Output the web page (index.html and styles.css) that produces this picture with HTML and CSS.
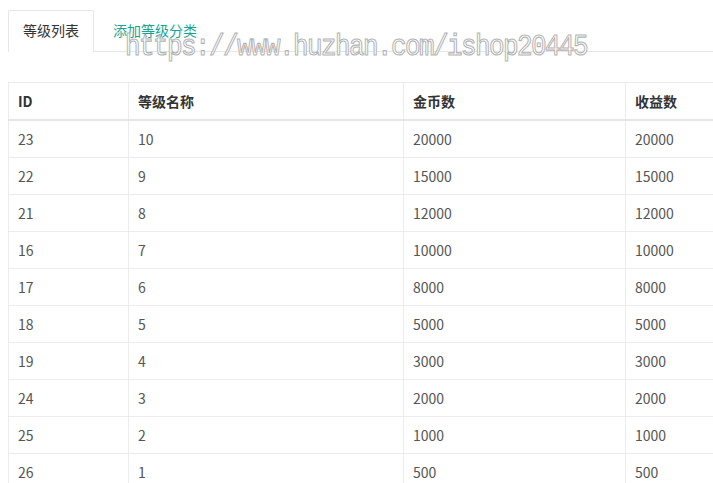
FILE: index.html
```html
<!DOCTYPE html>
<html lang="zh">
<head>
<meta charset="utf-8">
<title>等级列表</title>
<link rel="stylesheet" href="styles.css">
</head>
<body>
<div class="page">
  <div class="tabs">
    <ul class="tab-title">
      <li class="tab active">等级列表</li>
      <li class="tab link">添加等级分类</li>
    </ul>
  </div>
  <div class="watermark">https://www.huzhan.com/ishop20445</div>
  <div class="table-wrap">
  <table class="grid">
    <colgroup>
      <col class="c1"><col class="c2"><col class="c3"><col class="c4">
    </colgroup>
    <thead>
      <tr><th>ID</th><th>等级名称</th><th>金币数</th><th>收益数</th></tr>
    </thead>
    <tbody>
      <tr><td>23</td><td>10</td><td>20000</td><td>20000</td></tr>
      <tr><td>22</td><td>9</td><td>15000</td><td>15000</td></tr>
      <tr><td>21</td><td>8</td><td>12000</td><td>12000</td></tr>
      <tr><td>16</td><td>7</td><td>10000</td><td>10000</td></tr>
      <tr><td>17</td><td>6</td><td>8000</td><td>8000</td></tr>
      <tr><td>18</td><td>5</td><td>5000</td><td>5000</td></tr>
      <tr><td>19</td><td>4</td><td>3000</td><td>3000</td></tr>
      <tr><td>24</td><td>3</td><td>2000</td><td>2000</td></tr>
      <tr><td>25</td><td>2</td><td>1000</td><td>1000</td></tr>
      <tr><td>26</td><td>1</td><td>500</td><td>500</td></tr>
    </tbody>
  </table>
  </div>
</div>
</body>
</html>
```
FILE: styles.css
```css
html, body {
  margin: 0;
  padding: 0;
  background: #fff;
  overflow: hidden;
}
body {
  font-family: "Noto Sans CJK SC", "Noto Sans", sans-serif;
  font-size: 14px;
  color: #555;
}
.page {
  position: relative;
  padding: 10px 0 0 8px;
  overflow: hidden;
}
.tab-title {
  list-style: none;
  margin: 0;
  padding: 0;
  display: flex;
  gap: 4px;
  height: 41px;
  border-bottom: 1px solid #e6e6e6;
}
.tab {
  height: 41px;
  line-height: 40px;
  padding: 0 15px;
  box-sizing: border-box;
  font-size: 14px;
  white-space: nowrap;
}
.tab.active {
  color: #333;
  border: 1px solid #e6e6e6;
  border-bottom: none;
  border-radius: 2px 2px 0 0;
  height: 42px;
  padding: 0 14px;
  background: #fff;
  line-height: 38px;
}
.tab.link {
  color: #15a592;
}
.watermark {
  position: absolute;
  left: 125px;
  top: 28px;
  font-family: "Liberation Mono", monospace;
  font-size: 26px;
  letter-spacing: -1.6px;
  line-height: 40px;
  color: #fff;
  -webkit-text-stroke: 1px #b4b4b4;
  white-space: nowrap;
  pointer-events: none;
  transform: scaleY(1.15);
  transform-origin: 0 70%;
}
.table-wrap {
  margin-top: 30px;
  overflow: hidden;
}
.grid {
  border-collapse: collapse;
  table-layout: fixed;
  width: 820px;
  border: 1px solid #e6e6e6;
}
.c1 { width: 120px; }
.c2 { width: 275px; }
.c3 { width: 222px; }
.c4 { width: 203px; }
.grid th, .grid td {
  border: 1px solid #ececec;
  padding: 8px 9px;
  height: 20px;
  line-height: 20px;
  text-align: left;
  vertical-align: middle;
  box-sizing: content-box;
}
.grid th {
  font-weight: bold;
  color: #333;
  border-bottom: 2px solid #e6e6e6;
}
.grid td {
  color: #555;
}
```
